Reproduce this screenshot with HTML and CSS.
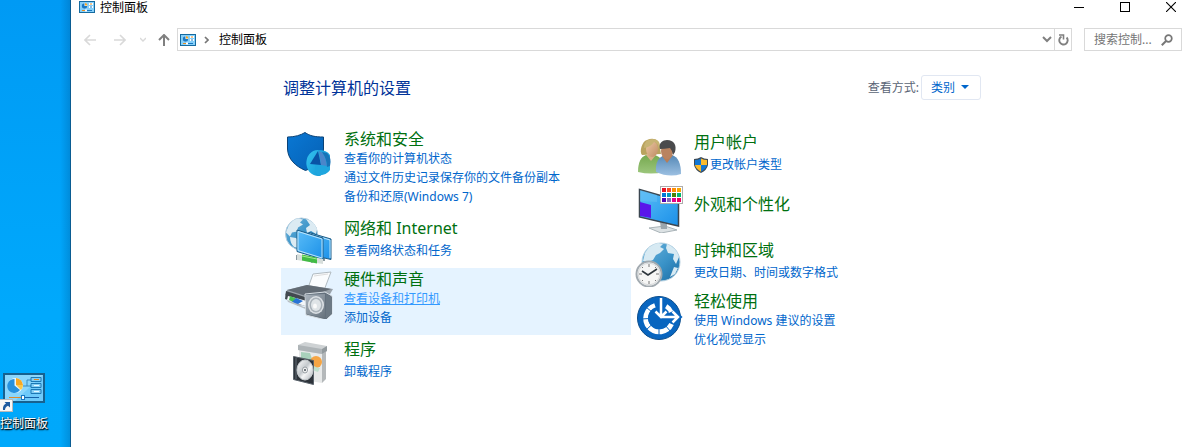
FILE: index.html
```html
<!DOCTYPE html>
<html lang="zh-CN">
<head>
<meta charset="utf-8">
<title>控制面板</title>
<link rel="stylesheet" href="styles.css">
</head>
<body>
<svg class="defs" width="0" height="0" aria-hidden="true">
  <defs>
    <linearGradient id="sea" x1="0" y1="0" x2="1" y2="1"><stop offset="0" stop-color="#6fb4dc"/><stop offset=".55" stop-color="#3a93c8"/><stop offset="1" stop-color="#1b6ba3"/></linearGradient>
    <linearGradient id="screen" x1="0" y1="0" x2="1" y2="1"><stop offset="0" stop-color="#5bbcf8"/><stop offset=".5" stop-color="#3aa7f0"/><stop offset="1" stop-color="#1b8fe8"/></linearGradient>
    <linearGradient id="steel" x1="0" y1="0" x2="1" y2="1"><stop offset="0" stop-color="#aab4bd"/><stop offset="1" stop-color="#66727d"/></linearGradient>
    <linearGradient id="disc" x1="0" y1="0" x2="1" y2="1"><stop offset="0" stop-color="#fff"/><stop offset=".45" stop-color="#c3c8cc"/><stop offset=".6" stop-color="#f5f6f7"/><stop offset="1" stop-color="#a9afb5"/></linearGradient>
    <linearGradient id="shieldblue" x1="0" y1="0" x2="1" y2="1"><stop offset="0" stop-color="#0a78d4"/><stop offset="1" stop-color="#0560b4"/></linearGradient>
    <linearGradient id="pie" x1="0" y1="0" x2="1" y2="1"><stop offset="0" stop-color="#35c3f0"/><stop offset="1" stop-color="#159bd7"/></linearGradient>
    <linearGradient id="skin" x1="0" y1="0" x2="1" y2="1"><stop offset="0" stop-color="#edc9a4"/><stop offset="1" stop-color="#bf8c65"/></linearGradient>
    <linearGradient id="greenshirt" x1="0" y1="0" x2="0" y2="1"><stop offset="0" stop-color="#76a94f"/><stop offset="1" stop-color="#9cc67c"/></linearGradient>
    <linearGradient id="blueshirt" x1="0" y1="0" x2="0" y2="1"><stop offset="0" stop-color="#5588b6"/><stop offset="1" stop-color="#9cc0e2"/></linearGradient>
    <symbol id="panel-small" viewBox="0 0 16 12">
      <rect x=".5" y=".5" width="15" height="11" fill="#86d0fa" stroke="#156a9f"/>
      <circle cx="5.500" cy="5" r="2.700" fill="#fff"/><path d="M5.500 5V2.300A2.700 2.700 0 1 0 8.200 5Z" fill="#1979c4"/><path d="M6 4.500V2a2.600 2.600 0 0 1 2.500 2.500Z" fill="#f5a623"/>
      <path d="M10 3h4M10 6h4" stroke="#fff" stroke-width="2"/><path d="M11 3h2" stroke="#f08b23"/><path d="M11 6h2" stroke="#1979c4"/>
      <path d="M3 9.500h3" stroke="#e78b1d"/><path d="M8 9.500h5" stroke="#1979c4"/><path d="M6 9.500h2" stroke="#fff" stroke-width="2"/>
    </symbol>
  </defs>
</svg>

<aside class="desktop">
  <a class="shortcut" href="#">
    <span class="shortcut-art">
      <svg width="42" height="30" viewBox="0 0 42 30">
        <rect x="1" y="1" width="40" height="28" fill="#6fcafa" stroke="#17618f" stroke-width="2"/>
        <path d="M2 2h38L12 28H2Z" fill="#8ad6fc"/>
        <circle cx="12.500" cy="12.500" r="7.500" fill="#e9f7ff"/>
        <path d="M11.500 12.500V6a7 7 0 1 0 5.500 11Z" fill="#2691de"/>
        <path d="M13 12V5a7.500 7.500 0 0 1 7 7Z" fill="#f7a823"/><path d="M13 12h7a7.500 7.500 0 0 1-2 5Z" fill="#fbc84a"/>
        <path d="M20 13h4V7h4M27 13h2M24 13h4" fill="none" stroke="#3a8cc0"/>
        <path d="M28 4.500h10v4H28ZM28 10.500h10v4H28ZM28 16.500h10v4H28Z" fill="#83cef5" stroke="#1d78b5"/>
        <path d="M31 6.500h5" stroke="#e28520"/><path d="M31 12.500h5M31 18.500h5" stroke="#e5f7ff"/>
        <path d="M6 24.500h13" stroke="#de8a2c"/><path d="M21 24.500h15" stroke="#1561a7"/><rect x="18.500" y="22.500" width="3" height="4" fill="#fff" stroke="#1979c4"/>
      </svg>
      <svg class="shortcut-badge" width="13" height="13" viewBox="0 0 13 13">
        <rect x="-.5" y=".5" width="13" height="12" fill="#f7f7f7" stroke="#b9b9b9"/>
        <path d="M3 11C2.500 7.500 4 5.500 6 4.500L4.500 3H10v5.500L8 6.700C6 7.500 5 9 5 11Z" fill="#1c5aa0"/>
      </svg>
    </span>
    <span class="shortcut-label">控制面板</span>
  </a>
</aside>

<main class="window">
  <header class="titlebar">
    <svg width="16" height="12"><use href="#panel-small"/></svg>
    <span class="title">控制面板</span>
    <div class="controls">
      <button type="button" aria-label="最小化"><svg width="10" height="10"><path d="M0 5.500h10" stroke="#000"/></svg></button>
      <button type="button" aria-label="最大化"><svg width="10" height="10"><rect x=".5" y=".5" width="9" height="9" fill="none" stroke="#000"/></svg></button>
      <button type="button" aria-label="关闭"><svg width="10" height="10"><path d="M0 0l10 10M10 0L0 10" stroke="#000" stroke-width="1.100"/></svg></button>
    </div>
  </header>

  <nav class="toolbar">
    <div class="history">
      <button type="button" class="nav-arrow" aria-label="后退"><svg width="12" height="12"><path d="M12 6H1M6 1L1 6l5 5" fill="none" stroke="#d9d9d9" stroke-width="1.600"/></svg></button>
      <button type="button" class="nav-arrow" aria-label="前进"><svg width="12" height="12"><path d="M0 6h11M6 1l5 5-5 5" fill="none" stroke="#d9d9d9" stroke-width="1.600"/></svg></button>
      <button type="button" class="nav-recent" aria-label="最近浏览的位置"><svg width="6" height="5"><path d="M0 1l3 3 3-3" fill="none" stroke="#d9d9d9" stroke-width="1.400"/></svg></button>
      <button type="button" class="nav-up" aria-label="上移"><svg width="12" height="12"><path d="M6 12V1M1 6l5-5 5 5" fill="none" stroke="#808080" stroke-width="2"/></svg></button>
    </div>
    <div class="address">
      <svg width="16" height="12"><use href="#panel-small"/></svg>
      <svg class="crumb-arrow" width="5" height="8"><path d="M1 1l3 3-3 3" fill="none" stroke="#777" stroke-width="1.700"/></svg>
      <a class="crumb" href="#">控制面板</a>
      <button type="button" class="address-drop" aria-label="以前的位置"><svg width="10" height="7"><path d="M1 1l4 4 4-4" fill="none" stroke="#808080" stroke-width="2"/></svg></button>
      <button type="button" class="refresh" aria-label="刷新"><svg width="11" height="12" viewBox="0 0 11 12"><path d="M3.500 2.600A4.200 4.200 0 1 0 8.600 3.500" fill="none" stroke="#808080" stroke-width="1.900"/><path d="M1 1h4.500v4.500" fill="none" stroke="#808080" stroke-width="1.600"/></svg></button>
    </div>
    <form class="search" role="search">
      <input type="text" aria-label="搜索控制面板" placeholder="搜索控制...">
      <button type="submit" aria-label="搜索"><svg width="12" height="12"><circle cx="7.500" cy="4.500" r="3.300" fill="none" stroke="#777" stroke-width="1.700"/><path d="M5 7L.8 11.200" stroke="#777" stroke-width="2"/></svg></button>
    </form>
  </nav>

  <section class="content">
    <div class="heading">
      <h1>调整计算机的设置</h1>
      <div class="view">
        <label for="view-by">查看方式:</label>
        <div class="view-box">
          <select id="view-by"><option>类别</option></select>
          <svg class="view-arrow" width="8" height="4"><path d="M0 0h8L4 4Z" fill="#06c"/></svg>
        </div>
      </div>
    </div>

    <div class="columns">
      <div class="column">
        <article class="category tall">
          <svg class="icon" viewBox="0 0 48 48">
            <path d="M2.500 6C10 6 16 4 20 1.500C25 5 30 6 38.500 6V18C38 29 30 36 20.500 39.500C10 35 3 28 2.500 18Z" fill="url(#shieldblue)" stroke="#0a4277"/>
            <path d="M33 19A11.500 13 0 1 0 36 44.500V23Z" fill="url(#pie)"/>
            <path d="M33 19q9 0 12 5v15q-3 5-12 5.500-6-6 1-20Z" fill="#1fa6de"/>
            <path d="M33 20L25 33l11 1Z" fill="#0953a5"/><path d="M34 20q6 1 8 15l-6-1Z" fill="#4a86ca"/><path d="M42 22q5 5 3 13l-3 1q0-8-5-15Z" fill="#1773b7"/>
          </svg>
          <div class="text"><h2><a href="#">系统和安全</a></h2><a href="#">查看你的计算机状态</a><a href="#">通过文件历史记录保存你的文件备份副本</a><a href="#">备份和还原(Windows 7)</a></div>
        </article>
        <article class="category">
          <svg class="icon" viewBox="0 0 48 48">
            <circle cx="16.500" cy="17" r="16" fill="url(#sea)" stroke="#b7cede"/>
            <path d="M3 10Q6 3 13 1.500l5 1-3 3 3 2-5 3-1 4-5 1-2 4-4-4ZM5 20l6 1 4 4-2 6-4-1Q5 26 5 20ZM21 2q8 2 11 10l-1 5-5-3-4 2-1-5 4-3Z" fill="#dcebf3"/>
            <path d="M12 38v5M27 41v5M39 41v3" stroke="#8a989f" stroke-width="2"/>
            <path d="M24 15.500l22 6.500v20.500l-22-5Z" fill="url(#screen)" stroke="#215d85"/>
            <path d="M25 17l20 6v18" fill="none" stroke="#bfe6fb"/>
            <path d="M12 13l26 8v21.500l-26-8Z" fill="url(#screen)" stroke="#215d85"/>
            <path d="M13 14.500l24 7.500v19l-24-7.500Z" fill="none" stroke="#bfe6fb"/>
            <path d="M12 37l26 5v5l-26-4Z" fill="#d7dedb"/><path d="M17 37.500l15 3v6l-15-3Z" fill="#42bb45"/><path d="M17 39l15 3" stroke="#a1eb8e"/>
          </svg>
          <div class="text"><h2><a href="#">网络和 Internet</a></h2><a href="#">查看网络状态和任务</a></div>
        </article>
        <article class="category tall active">
          <svg class="icon" viewBox="0 0 48 48">
            <path d="M23 17L28 3l18-2-8 21Z" fill="#fafcfd" stroke="#b1bbc1"/><path d="M29 5l14-2" stroke="#ddd"/>
            <path d="M2 19l20-5 26 4-7 12-28 5L0 24Z" fill="#9aa3ab"/><path d="M2 19l20-5 24 4-22 8Z" fill="#626b74"/><path d="M1 20l22 7v9L0 28Z" fill="#42494f"/>
            <path d="M3 25l19 5-2 5-18-6Z" fill="#f3f7fa"/><path d="M5 25l7 3-4 3-4-2Z" fill="#4ac055"/><path d="M11 27l7 3-5 3-6-2Z" fill="#2873d6"/>
            <path d="M2 29l17 7 4-1v4l-20-8Z" fill="#b7bec4"/>
            <path d="M20 23l20-2 7 4v18l-6 6-20-5Z" fill="#64717d" stroke="#d9e0e5"/>
            <path d="M21 24l19-1v24l-19-4Z" fill="url(#steel)"/><path d="M41 23l6 3v17l-6 5Z" fill="#6c7984"/>
            <ellipse cx="31" cy="34" rx="8" ry="9" fill="#dce1e5"/><ellipse cx="31" cy="34" rx="6.500" ry="7.500" fill="#a9b2b9"/><ellipse cx="31" cy="34" rx="5" ry="6" fill="#dfe4e7"/><ellipse cx="30" cy="35" rx="2" ry="2.500" fill="#fafafa"/>
          </svg>
          <div class="text"><h2><a href="#">硬件和声音</a></h2><a class="hover" href="#">查看设备和打印机</a><a href="#">添加设备</a></div>
        </article>
        <article class="category">
          <svg class="icon" viewBox="0 0 48 48">
            <path d="M14 9l23 4v32l-23-4Z" fill="#e7e9e9"/><path d="M37 13l4-2v30l-4 4Z" fill="#b4b8ba"/>
            <path d="M13 7l7-3 22 4v5l-5 3-24-4Z" fill="#ced2d4"/><path d="M13 7l24 4v5l-24-4Z" fill="#aeb4b7"/><path d="M37 11l5-3v5l-5 3Z" fill="#929a9e"/>
            <path d="M16 14l9 1 3 9-12-3Z" fill="#a8d1bb"/><circle cx="31" cy="24" r="6" fill="#f5a544"/><path d="M24 23q5 7 11 7l-2 4-9-3Z" fill="#bfe0cd"/>
            <path d="M8.500 18.500l20 4v24l-20-5Z" fill="#2d333a" stroke="#5a636b"/><path d="M11 20v21" stroke="#626c74"/>
            <ellipse cx="20" cy="32" rx="8" ry="10" fill="url(#disc)" stroke="#c9ced1"/><ellipse cx="20" cy="32" rx="2.500" ry="3" fill="#fff" stroke="#939a9f"/><ellipse cx="20" cy="32" rx="1" ry="1.300" fill="#5c646a"/>
          </svg>
          <div class="text"><h2><a href="#">程序</a></h2><a href="#">卸载程序</a></div>
        </article>
      </div>

      <div class="column">
        <article class="category">
          <svg class="icon" viewBox="0 0 48 48">
            <path d="M7 24C4 21 7 10 12 9c7-3 13 0 13 8l1 6Z" fill="#b9a35e"/>
            <path d="M3 41c0-10 3-15 8-17h9c6 2 9 7 9 17q-13 3-26 0Z" fill="url(#greenshirt)"/><path d="M11 24l5 6 5-6Z" fill="#d8af87"/>
            <ellipse cx="17" cy="18" rx="6" ry="8" fill="url(#skin)"/><path d="M9 17q7-1 10-6 4 1 5 7 3-9-6-10-9 0-9 9Z" fill="#c7b474"/>
            <path d="M21 41c-1-10 3-15 9-17h7c6 2 9 8 9 19q-12 4-25-2Z" fill="url(#blueshirt)"/><path d="M27 25l5 7 6-8Z" fill="#b77d57"/>
            <ellipse cx="32" cy="20" rx="6" ry="8" fill="#b98360"/><path d="M25 18c-2-6 3-9 7-9 7 0 10 5 8 12l-2 3q-1-5-3-7-6 1-10 1Z" fill="#4a4a4c"/>
          </svg>
          <div class="text"><h2><a href="#">用户帐户</a></h2><a class="shielded" href="#"><svg width="14" height="16" viewBox="0 0 14 16"><path d="M7 0q3 2 7 2v6q-1 5-7 8Q1 13 0 8V2q4 0 7-2Z" fill="#3f4b55"/><path d="M7 1.500V8H1V3q3 0 6-1.500ZM7 8h6q-1 4-6 6.700Z" fill="#1377d4"/><path d="M7 1.500V8h6V3q-3 0-6-1.500ZM7 8H1q1 4 6 6.700Z" fill="#fdbb2c"/></svg>更改帐户类型</a></div>
        </article>
        <article class="category solo">
          <svg class="icon" viewBox="0 0 48 48">
            <path d="M14 43l16-2 12 4-16 3Z" fill="#dce2e4" stroke="#a9b3b8"/><path d="M25 37l7 2v5h-6Z" fill="#9ba6ad"/>
            <path d="M4.500 4.500l39 11v25.500l-39-9Z" fill="url(#screen)" stroke="#3b4650" stroke-width="1.500"/><path d="M5 5l17 5v7L5 16Z" fill="#65c1f5" opacity=".5"/>
            <path d="M5 17l11 3v13L5 31Z" fill="#5a16ea"/>
            <rect x="25.500" y="1.500" width="22" height="17" fill="#fff" stroke="#adadad"/>
            <path d="M27 3h4v4h-4Z" fill="#e81123"/><path d="M32 3h4v4h-4Z" fill="#f74b24"/><path d="M37 3h4v4h-4Z" fill="#ff8c00"/><path d="M42 3h4v4h-4Z" fill="#f8a400"/>
            <path d="M27 8h4v4h-4Z" fill="#0078d7"/><path d="M32 8h4v4h-4Z" fill="#0099bc"/><path d="M37 8h4v4h-4Z" fill="#498205"/><path d="M42 8h4v4h-4Z" fill="#00b76d"/>
            <path d="M27 13h4v4h-4Z" fill="#4f00b5"/><path d="M32 13h4v4h-4Z" fill="#8764b8"/><path d="M37 13h4v4h-4Z" fill="#e3008c"/><path d="M42 13h4v4h-4Z" fill="#ea005e"/>
          </svg>
          <div class="text"><h2><a href="#">外观和个性化</a></h2></div>
        </article>
        <article class="category">
          <svg class="icon" viewBox="0 0 48 48">
            <circle cx="26" cy="23" r="19" fill="url(#sea)" stroke="#b8d2e1"/>
            <path d="M10 14Q14 6 23 4l5 1-3 3 4 2-4 4-4 2-3 5-5 2-5-1ZM32 5q10 4 12 13l-3 7-3-5 1-5-6-1-2-5ZM39 28l4 1-3 6-5 3Z" fill="#d7eaf3"/>
            <circle cx="14" cy="35" r="12.500" fill="#f6f6f5" stroke="#a2aab0" stroke-width="2"/><circle cx="14" cy="35" r="10.800" fill="none" stroke="#d5d8da"/>
            <path d="M14 25v3M14 42v3M4 35h3M21 35h3M7 28l1 1M20 41l1 1M7 42l1-1M20 29l1-1" stroke="#777"/>
            <path d="M7 32l6 4 9-6" fill="none" stroke="#2e363c" stroke-width="1.600"/>
          </svg>
          <div class="text"><h2><a href="#">时钟和区域</a></h2><a href="#">更改日期、时间或数字格式</a></div>
        </article>
        <article class="category tall">
          <svg class="icon" viewBox="0 0 48 48">
            <circle cx="24" cy="25" r="21.500" fill="#0865bf" stroke="#0a4c8b"/>
            <path d="M20 12.500A13.500 13.500 0 1 0 36.500 31" fill="none" stroke="#fff" stroke-width="5"/>
            <path d="M31 13.500a13.500 13.500 0 0 1 5 5.500" fill="none" stroke="#fff" stroke-width="5"/>
            <path d="M24 25L11 14M24 25L6 26M24 25L11 37M24 25v17M24 25l12 14" stroke="#0865bf"/>
            <circle cx="24" cy="25" r="11" fill="#0865bf"/>
            <path d="M26 4v18M20 17l6 6 6-6M26 24h17M38 18l6 6-6 6" fill="none" stroke="#0865bf" stroke-width="5"/>
            <path d="M26 5v19M20.500 18.500L26 24l5.500-5.500M26 24h17M37.500 18.500L43 24l-5.500 5.500" fill="none" stroke="#fff" stroke-width="2.500"/>
          </svg>
          <div class="text"><h2><a href="#">轻松使用</a></h2><a href="#">使用 Windows 建议的设置</a><a href="#">优化视觉显示</a></div>
        </article>
      </div>
    </div>
  </section>
</main>
</body>
</html>
```
FILE: styles.css
```css
* { box-sizing: border-box; }

body {
  margin: 0;
  height: 100vh;
  display: flex;
  overflow: hidden;
  background: #fff;
  font: 12px/19px "Noto Sans", "Noto Sans CJK SC", sans-serif;
  color: #000;
}

button, input, select { font: inherit; margin: 0; padding: 0; border: 0; background: none; }
button { display: flex; align-items: center; justify-content: center; }
a { color: #0066cc; text-decoration: none; }
svg { display: block; flex: none; }
h1, h2 { margin: 0; font-size: 16px; font-weight: 400; }
.defs { position: absolute; }

.desktop {
  flex: 0 0 71px;
  display: flex;
  flex-direction: column;
  justify-content: flex-end;
  padding-bottom: 14px;
  border-right: 1px solid #0a5c92;
  background:
    linear-gradient(to right, transparent 86%, rgba(0, 70, 130, .25)),
    linear-gradient(#009af4, #00a9fc 70%, #00a8fb);
}
.shortcut { width: 48px; display: flex; flex-direction: column; gap: 11px; color: #fff; }
.shortcut-art { position: relative; padding-left: 3px; }
.shortcut-badge { position: absolute; left: 0; bottom: -9px; }
.shortcut-label { white-space: nowrap; line-height: 19px; text-shadow: 0 1px 2px #000, 1px 1px 1px #000; }

.window { flex: 1; min-width: 0; overflow: hidden; }

.titlebar { display: flex; align-items: center; height: 14px; padding-left: 8px; }
.title { margin-left: 5px; }
.controls { display: flex; margin: 0 -3px 0 auto; }
.controls button { width: 46px; height: 14px; }

.toolbar { display: flex; align-items: center; padding: 14px 9px 0 13px; }
.history { display: flex; align-items: center; width: 93px; }
.nav-arrow { width: 12px; margin-right: 18px; }
.nav-recent { width: 6px; margin-left: -4px; }
.nav-up { width: 12px; margin-left: 12px; }
.address { flex: 1; display: flex; align-items: center; height: 23px; padding-left: 2px; border: 1px solid #d9d9d9; }
.crumb-arrow { margin: 0 10px 0 8px; }
.crumb { color: #000; }
.address-drop { width: 14px; height: 21px; margin-left: auto; }
.refresh { width: 17px; height: 21px; border-left: 1px solid #d9d9d9; }
.search { display: flex; align-items: center; width: 98px; height: 23px; margin-left: 12px; padding: 0 8px 0 9px; border: 1px solid #d9d9d9; }
.search input { flex: 1; min-width: 0; height: 21px; outline: 0; }
.search input::placeholder { color: #757575; opacity: 1; }

.content { max-width: 700px; margin: 24px auto 0; }
.heading { display: flex; align-items: center; justify-content: space-between; padding-left: 2px; }
.heading h1 { color: #003399; line-height: 23px; padding-top: 2px; }
.view { display: flex; align-items: center; gap: 2px; color: #5a6475; }
.view-box { position: relative; }
.view select { appearance: none; display: block; width: 60px; height: 25px; padding-left: 9px; border: 1px solid #e1e7f2; border-radius: 3px; color: #0066cc; }
.view-arrow { position: absolute; right: 12px; top: 10px; pointer-events: none; }

.columns { display: flex; margin-top: 28px; }
.column { flex: 1; min-width: 0; }
.category { display: flex; gap: 11px; min-height: 54px; padding: 3px 4px; }
.category.tall { padding: 0 4px 8px; }
.category.tall .icon { margin-top: 3px; }
.category.active { background: #e5f3ff; }
.icon { width: 48px; height: 48px; }
.text { display: flex; flex-direction: column; align-items: flex-start; padding-top: 2px; white-space: nowrap; }
.text h2 { line-height: 19px; }
.category:not(.tall) h2 { margin-bottom: 3px; }
.category.solo .text { padding-top: 10px; }
.text h2 a { color: #007010; }
.text a.hover { color: #3399ff; text-decoration: underline; }
.shielded { display: flex; align-items: center; gap: 2px; }
```
